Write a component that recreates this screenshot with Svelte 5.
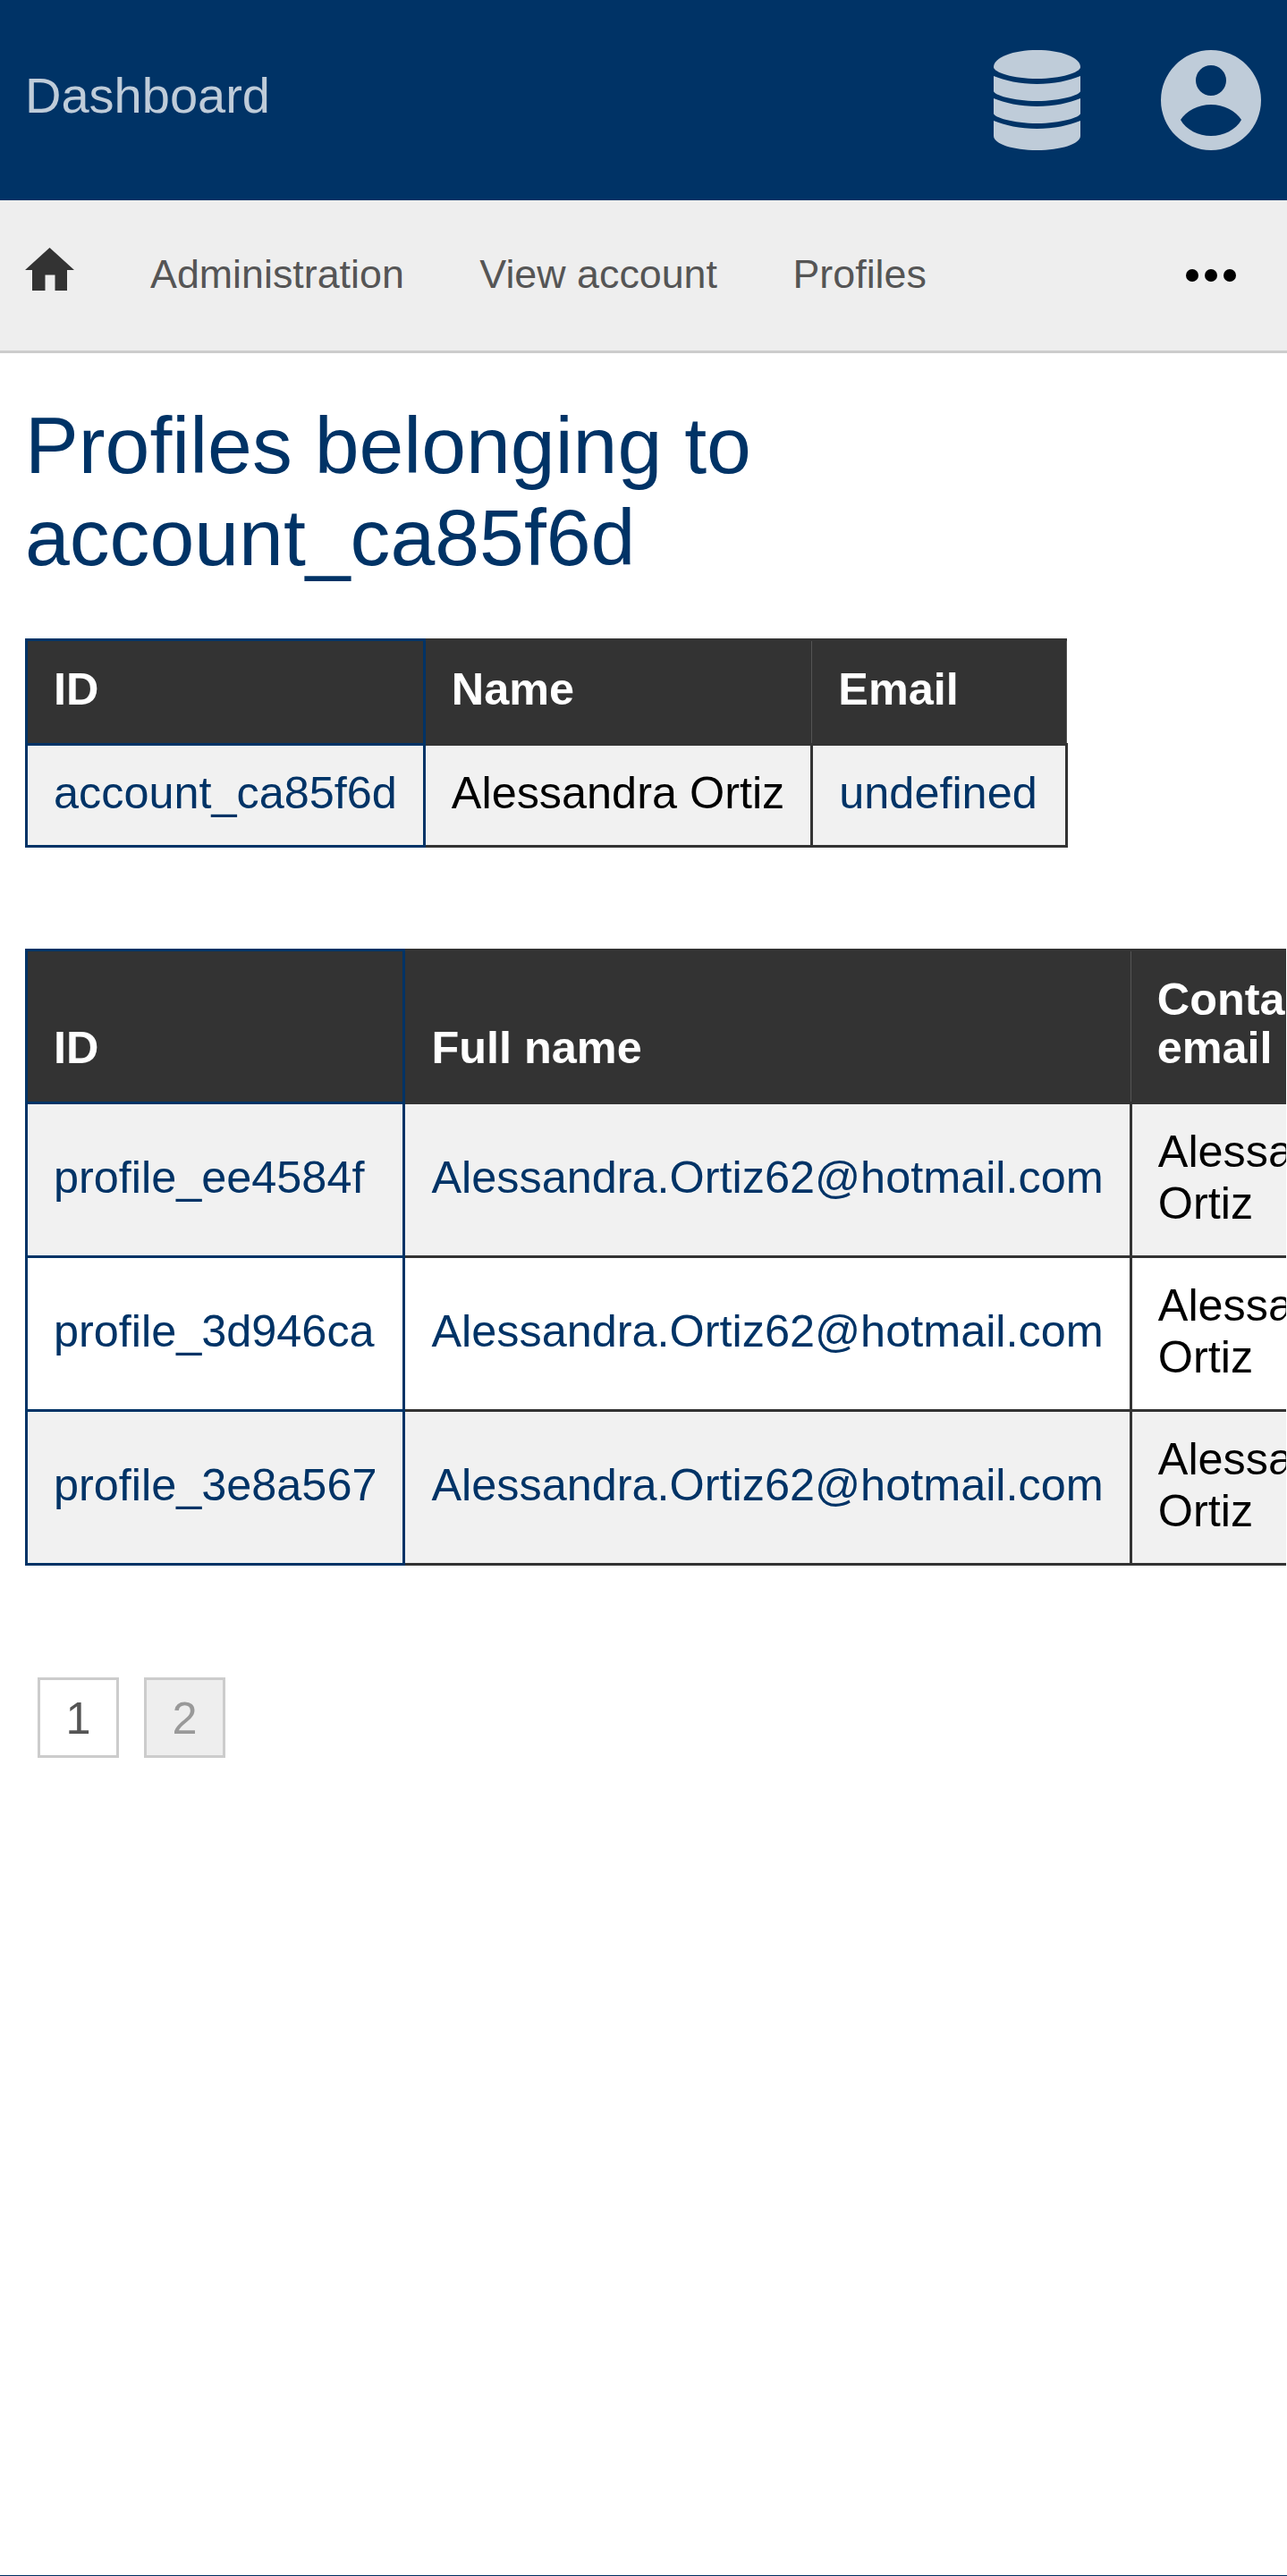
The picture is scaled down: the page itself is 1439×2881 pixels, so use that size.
<script lang="ts">
  const accounts = [{ id: 'account_ca85f6d', name: 'Alessandra Ortiz', email: 'undefined' }];
  const profiles = [
    { id: 'profile_ee4584f', name: 'Alessandra.Ortiz62@hotmail.com', contact: 'Alessandra Ortiz' },
    { id: 'profile_3d946ca', name: 'Alessandra.Ortiz62@hotmail.com', contact: 'Alessandra Ortiz' },
    { id: 'profile_3e8a567', name: 'Alessandra.Ortiz62@hotmail.com', contact: 'Alessandra Ortiz' }
  ];
</script>

<div class="page">
  <header class="topbar">
    <a class="brand" href="#dashboard">Dashboard</a>
    <div class="topbar-icons">
      <svg class="db" viewBox="0 0 97 112" aria-label="Databases">
        <path d="M0 19C0 8 22 0 48.500 0S97 8 97 19C97 25 75 32 48.500 32S0 25 0 19z" />
        <path d="M0 29C12 34 30 38 48.500 38S85 34 97 29V46C97 50 75 57 48.500 57S0 50 0 46z" />
        <path d="M0 54C12 59 30 63 48.500 63S85 59 97 54V71C97 75 75 82 48.500 82S0 75 0 71z" />
        <path d="M0 79C12 84 30 88 48.500 88S85 84 97 79V96C97 105 75 112 48.500 112S0 105 0 96z" />
      </svg>
      <svg class="user" viewBox="0 0 112 112" aria-label="User">
        <path fill-rule="evenodd" d="M56 0a56 56 0 1 1 0 112A56 56 0 0 1 56 0zM56 17a17 17 0 1 0 0 34a17 17 0 0 0 0-34zM22 78c6 11 20 18 34 18s28-7 34-18c-6-10-20-17-34-17s-28 7-34 17z" />
      </svg>
    </div>
  </header>

  <nav class="menu">
    <a class="home" href="#home" aria-label="Home">
      <svg viewBox="0 0 55 48"><path d="M27.500 0L55 25H47V48H33.500V30.500H22.500V48H8V25H0z" /></svg>
    </a>
    <a href="#administration">Administration</a>
    <a href="#account">View account</a>
    <a href="#profiles">Profiles</a>
    <span class="more" aria-label="More"><i></i><i></i><i></i></span>
  </nav>

  <main>
    <h1>Profiles belonging to account_ca85f6d</h1>

    <table class="first">
      <thead>
        <tr><th>ID</th><th>Name</th><th>Email</th></tr>
      </thead>
      <tbody>
        {#each accounts as account}
          <tr>
            <td><a href="#account">{account.id}</a></td>
            <td>{account.name}</td>
            <td><a href="#email">{account.email}</a></td>
          </tr>
        {/each}
      </tbody>
    </table>

    <div class="scroller">
      <table>
        <thead>
          <tr><th>ID</th><th>Full name</th><th>Contact email</th></tr>
        </thead>
        <tbody>
          {#each profiles as profile}
            <tr>
              <td><a href="#profile">{profile.id}</a></td>
              <td><a href="#mail">{profile.name}</a></td>
              <td>{profile.contact}</td>
            </tr>
          {/each}
        </tbody>
      </table>
    </div>

    <div class="pager">
      <a href="#page-1">1</a>
      <span class="off">2</span>
    </div>
  </main>

  <footer></footer>
</div>

<style>
  :global(body) {
    margin: 0;
    font-family: "Liberation Sans", Arial, sans-serif;
    font-size: 50.4px;
    color: #000;
    background: #fff;
  }

  a {
    text-decoration: none;
    color: #003366;
  }

  .page {
    display: flex;
    flex-direction: column;
    min-height: 100vh;
  }

  .topbar {
    display: flex;
    align-items: center;
    justify-content: space-between;
    height: 224px;
    padding: 0 28px;
    background: #003366;
  }

  .brand {
    padding-bottom: 12px;
    font-size: 56px;
    color: #bfccd9;
  }

  .topbar-icons {
    display: flex;
    align-items: center;
    gap: 90px;
    padding-right: 1px;
  }

  .topbar-icons svg {
    display: block;
    height: 112px;
    fill: #bfccd9;
  }

  .db {
    width: 97px;
  }

  .user {
    width: 112px;
  }

  .menu {
    display: flex;
    align-items: center;
    height: 168px;
    padding: 0 28px;
    background: #eee;
    border-bottom: 3px solid #ccc;
    font-size: 44.8px;
  }

  .menu a {
    color: #555;
    margin-right: 84.5px;
    padding-bottom: 3px;
  }

  .menu .home {
    display: block;
    margin: 0 85px 14px 0;
    padding: 0;
    height: 48px;
  }

  .home svg {
    display: block;
    width: 55px;
    height: 48px;
    fill: #333;
  }

  .more {
    display: flex;
    gap: 7px;
    margin-left: auto;
    padding-right: 29px;
  }

  .more i {
    display: block;
    width: 14px;
    height: 14px;
    border-radius: 50%;
    background: #000;
  }

  main {
    padding: 52px 0 0 28px;
  }

  h1 {
    margin: 0 0 61px;
    font-size: 89.6px;
    line-height: 103px;
    font-weight: 400;
    color: #003366;
    max-width: 1000px;
  }

  table {
    border-collapse: collapse;
  }

  table.first {
    margin-bottom: 113px;
  }

  .first th:last-child,
  .first td:last-child {
    padding-right: 31px;
  }

  th,
  td {
    border: 3px solid #333;
    text-align: left;
  }

  th {
    padding: 27px 29px 33px;
    line-height: 54px;
    vertical-align: bottom;
    background: #333;
    color: #fff;
    border-left: 1px solid #555;
    border-right: 1px solid #555;
  }

  td {
    padding: 23.5px 29px 29.5px;
    line-height: 58px;
  }

  tbody tr:nth-child(odd) td {
    background: #f1f1f1;
  }

  th:first-child,
  td:first-child {
    border: 3px solid #003366;
  }

  .scroller {
    overflow: hidden;
    margin-right: 1px;
  }

  .pager {
    display: flex;
    gap: 28px;
    margin: 125px 0 0 14px;
  }

  .pager a,
  .pager span {
    display: flex;
    align-items: center;
    justify-content: center;
    box-sizing: border-box;
    width: 91px;
    height: 90px;
    border: 3px solid #ccc;
    color: #555;
  }

  .pager .off {
    background: #eee;
    color: #999;
  }

  footer {
    margin-top: auto;
    height: 0;
    border-top: 1px solid #003366;
  }
</style>
